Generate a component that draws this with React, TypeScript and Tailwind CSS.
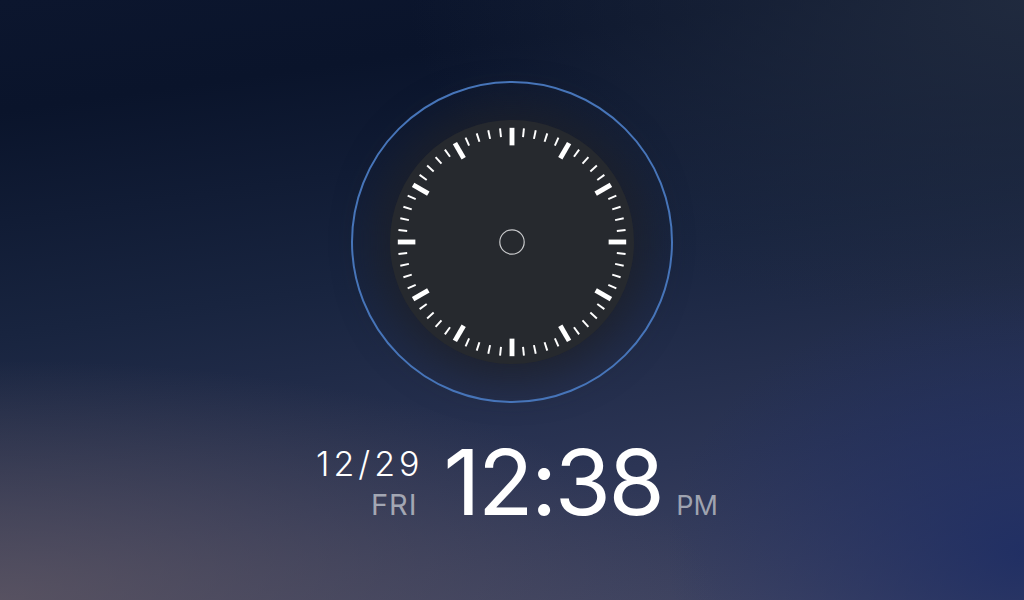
const ticks = Array.from({ length: 60 }, (_, i) => i);

function Dial() {
  const c = 125;
  return (
    <svg width="250" height="250" viewBox="0 0 250 250">
      {ticks.map((i) => {
        const major = i % 5 === 0;
        const a = (i * 6 * Math.PI) / 180;
        const r1 = major ? 99 : 108;
        const r2 = 117;
        return (
          <line
            key={i}
            x1={c + r1 * Math.sin(a)}
            y1={c - r1 * Math.cos(a)}
            x2={c + r2 * Math.sin(a)}
            y2={c - r2 * Math.cos(a)}
            stroke="#ffffff"
            strokeWidth={major ? 5 : 2}
          />
        );
      })}
      <circle cx={c} cy={c} r="12.5" fill="none" stroke="#c9cacc" strokeWidth="1.2" />
    </svg>
  );
}

export default function App() {
  return (
    <div
      className="w-[1024px] h-[600px] overflow-hidden flex flex-col items-center pt-[81px] font-['Inter',sans-serif] text-white bg-[radial-gradient(ellipse_70%_40%_at_0%_100%,rgba(100,90,100,0.75),transparent),radial-gradient(ellipse_35%_45%_at_100%_92%,rgba(28,44,100,0.85),transparent),radial-gradient(ellipse_60%_55%_at_100%_0%,rgba(34,44,64,0.9),transparent),linear-gradient(172deg,#0c162e_0%,#0a142b_15%,#18243f_45%,#2c3555_75%,#434764_100%)]"
    >
      <div className="w-[322px] h-[322px] rounded-full border-[2.5px] border-[#4b7dc6] flex items-center justify-center">
        <div className="w-[244px] h-[244px] rounded-full bg-[#26292e] shadow-[0_0_40px_14px_rgba(30,33,40,0.8)] flex items-center justify-center">
          <Dial />
        </div>
      </div>

      <div className="flex items-end mt-[34px] ml-[10px]">
        <div className="flex flex-col items-end pb-[9px] mr-[20px]">
          <span className="text-[34px] leading-none font-light tracking-[4px]">12/29</span>
          <span className="text-[29px] leading-none tracking-[1px] text-[#a3a7b3] mt-[9px] mr-[6px]">FRI</span>
        </div>
        <span className="text-[91px] leading-none tracking-[-2.5px]">12:38</span>
        <span className="text-[27px] leading-none text-[#9fa3b0] mb-[9px] ml-[14px]">PM</span>
      </div>
    </div>
  );
}
